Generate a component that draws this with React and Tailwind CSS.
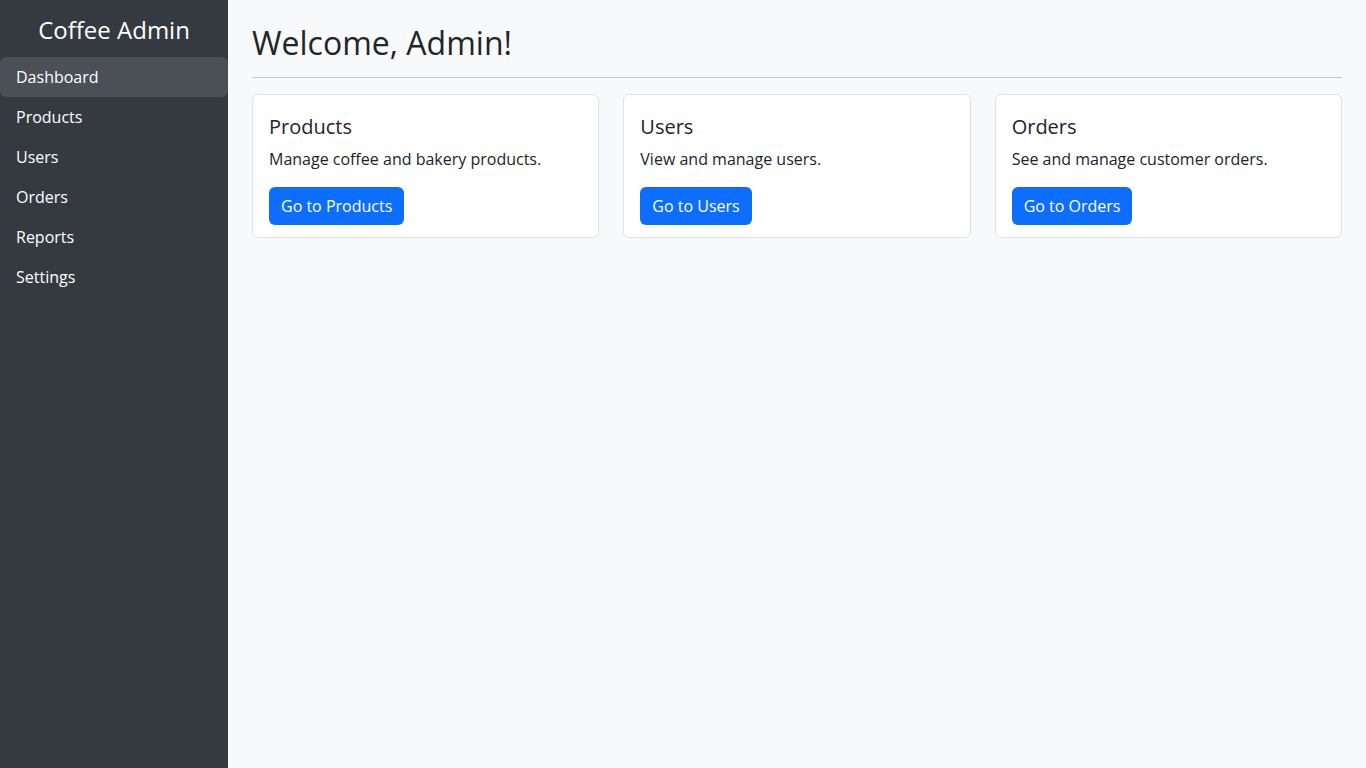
export default function App() {
  const links = ["Dashboard", "Products", "Users", "Orders", "Reports", "Settings"];
  const cards = [
    { t: "Products", d: "Manage coffee and bakery products.", b: "Go to Products" },
    { t: "Users", d: "View and manage users.", b: "Go to Users" },
    { t: "Orders", d: "See and manage customer orders.", b: "Go to Orders" },
  ];
  return (
    <div className="flex min-h-screen text-[#212529]" style={{ fontFamily: '"Open Sans", sans-serif' }}>
      <aside className="w-[228px] shrink-0 bg-[#343a40] text-white">
        <h1 className="text-[24px] text-center pt-[12px] pb-[9px] leading-[36px]">Coffee Admin</h1>
        <nav className="flex flex-col">
          {links.map((l, i) => (
            <a key={l} href="#" className={`h-[40px] flex items-center px-4 text-[16px] rounded-md ${i === 0 ? "bg-[#4b5057]" : ""}`}>
              {l}
            </a>
          ))}
        </nav>
      </aside>
      <main className="flex-1 bg-[#f8f9fa] px-6 pt-[20px]">
        <h2 className="text-[32px] leading-[46px]">Welcome, Admin!</h2>
        <hr className="mt-[11px] mb-4 border-[#c6c7c8]" />
        <div className="grid grid-cols-3 gap-6">
          {cards.map((c) => (
            <div key={c.t} className="bg-white border border-[#dee2e6] rounded-md p-4 h-[144px]">
              <h3 className="text-[20px] leading-[24px] mt-[4px] mb-2">{c.t}</h3>
              <p className="text-[16px] leading-[24px] mb-4">{c.d}</p>
              <button className="bg-[#0d6efd] text-white text-[16px] h-[38px] px-3 rounded-md">{c.b}</button>
            </div>
          ))}
        </div>
      </main>
    </div>
  );
}
